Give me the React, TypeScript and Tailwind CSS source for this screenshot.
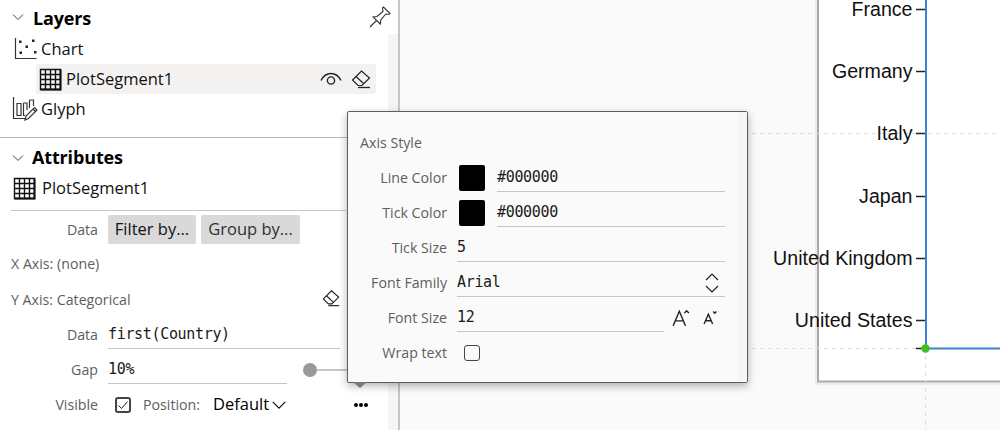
import React from "react";

const Chevron = ({ className = "", stroke = "#444" }: { className?: string; stroke?: string }) => (
  <svg width="14" height="14" viewBox="0 0 14 14" className={className} fill="none" stroke={stroke} strokeWidth="1">
    <path d="M2 4.5 L7 9.5 L12 4.5" />
  </svg>
);

const GridIcon = ({ size = 23 }: { size?: number }) => (
  <svg width={size} height={size} viewBox="0 0 23 23" fill="none" stroke="#111" strokeWidth="1.4" className="shrink-0">
    <path d="M1.5 1.5H21.5V21.5H1.5Z M1.5 6.5H21.5 M1.5 11.5H21.5 M1.5 16.5H21.5 M6.5 1.5V21.5 M11.5 1.5V21.5 M16.5 1.5V21.5" />
    <path d="M1.5 21.5H21.5V1.5" strokeWidth="2" />
  </svg>
);

const ChartIcon = () => (
  <svg width="23" height="22" viewBox="0 0 23 22" fill="none" className="shrink-0">
    <path d="M1.5 0V20.5H22.5" stroke="#333" strokeWidth="1.2" />
    <g fill="#222">
      <rect x="5" y="2.5" width="2.5" height="2.5" />
      <rect x="18" y="1.5" width="2.5" height="2.5" />
      <rect x="11.5" y="7.5" width="2.5" height="2.5" />
      <rect x="5.5" y="13.5" width="2.5" height="2.5" />
      <rect x="20" y="13" width="2.5" height="2.5" />
    </g>
  </svg>
);

const GlyphIcon = () => (
  <svg width="26" height="24" viewBox="0 0 26 24" fill="none" stroke="#333" strokeWidth="1.2" className="shrink-0">
    <path d="M1.5 0V21.5H13" />
    <path d="M5 6.5H9V18.5H5Z M11.5 6H15V13 M11.5 6V18.5H13 M17.5 3H21.5V9 M17.5 3V11" />
    <path d="M13 23L14 19L22.5 10.5L25 13L16.5 21.5Z M21 12L23.5 14.5" />
  </svg>
);

const Eraser = ({ size = 20 }: { size?: number }) => (
  <svg width={size} height={size} viewBox="0 0 20 20" fill="none" stroke="#222" strokeWidth="1.2" className="shrink-0">
    <path d="M1.5 11L10.5 2L18.5 9L11 16.5H7Z" />
    <path d="M5 7.5L12.5 14.5" />
    <path d="M7 18.5H19" strokeWidth="1.3" />
  </svg>
);

const Eye = () => (
  <svg width="22" height="16" viewBox="0 0 22 16" fill="none" stroke="#222" strokeWidth="1.4" className="shrink-0">
    <path d="M1 9.5C4 3.5 8 2.5 11 2.5C14 2.5 18 3.5 21 9.5" />
    <circle cx="11" cy="9.5" r="3.6" />
  </svg>
);

const Pin = () => (
  <svg width="22" height="22" viewBox="0 0 22 22" fill="none" stroke="#333" strokeWidth="1.1" className="shrink-0">
    <path d="M1 21L7.5 14.5 M4 11L8 10.5L14 5.5L13.5 2L14.5 1L21 7.5L20 8.5L16.8 8L11.8 14L11.3 18Z" />
  </svg>
);

const Check = ({ checked }: { checked?: boolean }) => (
  <span className={`flex h-[16px] w-[16px] shrink-0 items-center justify-center rounded-[3px] border-[#444] ${checked ? "border-2" : "border"}`}>
    {checked && (
      <svg width="12" height="12" viewBox="0 0 12 12" fill="none" stroke="#222" strokeWidth="1">
        <path d="M1.5 6.5L4.5 9.5L10.5 2.5" />
      </svg>
    )}
  </span>
);

const Label = "text-[14.2px] text-[#605e5c]";

const Row = ({ label, children }: { label: string; children?: React.ReactNode }) => (
  <div className="flex h-[35px] items-center">
    <span className={`w-[87px] shrink-0 text-right ${Label}`}>{label}</span>
    {children}
  </div>
);

const Mono = "font-['DejaVu_Sans_Mono',monospace] pt-[1px] text-[15px] tracking-[-0.33px] text-[#1a1a1a]";
const Body = "text-[16.5px] tracking-[0px]";

const PanelRow = ({ label, children }: { label: string; children?: React.ReactNode }) => (
  <div className="flex h-[35px] items-center">
    <span className={`w-[98px] shrink-0 text-right ${Label}`}>{label}</span>
    {children}
  </div>
);

export default function App() {
  const labels: [string, number][] = [
    ["France", 9],
    ["Germany", 71],
    ["Italy", 133],
    ["Japan", 196],
    ["United Kingdom", 258],
    ["United States", 320],
  ];
  return (
    <div className="relative flex h-[430px] w-[1000px] overflow-hidden bg-[#fafafa] font-['Open_Sans',sans-serif] text-[#111]">
      {/* Left panel */}
      <aside className="flex h-full w-[400px] shrink-0 border-r-2 border-[#c8c6c4] bg-white">
        <div className="w-[388px] shrink-0">
          <header className="-mr-[3px] flex h-[34px] items-center pl-[11px]">
            <Chevron />
            <h2 className="ml-[8px] flex-1 pt-[2px] text-[18px] font-bold tracking-[-0.15px] text-black">Layers</h2>
            <Pin />
          </header>
          <div className={`flex h-[30px] items-center pl-[14px] ${Body}`}>
            <ChartIcon />
            <span className="ml-[4px] pt-[1px]">Chart</span>
          </div>
          <div className={`ml-[36px] mr-[12px] flex h-[30px] items-center rounded-[3px] bg-[#f3f2f1] pl-[3px] pr-[5px] ${Body}`}>
            <GridIcon size={23} />
            <span className="ml-[4px] flex-1 pt-[1px]">PlotSegment1</span>
            <Eye />
            <span className="ml-[9px]"><Eraser /></span>
          </div>
          <div className={`flex h-[30px] items-center pl-[12px] ${Body}`}>
            <GlyphIcon />
            <span className="ml-[3px] pt-[1px]">Glyph</span>
          </div>
          <div className="mt-[13px] -mr-[12px] border-t border-[#b4b4b4]" />
          <header className="flex h-[38px] items-center pl-[11px] pt-[1px]">
            <Chevron />
            <h2 className="ml-[7px] text-[18px] font-bold tracking-[-0.15px] text-black">Attributes</h2>
          </header>
          <div className={`flex h-[24px] items-center pl-[13px] ${Body}`}>
            <GridIcon size={23} />
            <span className="ml-[6px] pt-[1px]">PlotSegment1</span>
          </div>
          <div className="ml-[11px] mt-[10px] w-[335px] border-t border-[#c8c6c4]" />
          <div className="flex h-[33px] items-center pt-[4px]">
            <span className={`w-[98px] shrink-0 text-right ${Label}`}>Data</span>
            <button className={`ml-[10px] h-[29px] w-[88px] rounded-[2px] bg-[#d9d9d9] ${Body}`}>Filter by...</button>
            <button className={`ml-[5px] h-[29px] w-[99px] rounded-[2px] bg-[#d9d9d9] text-[#323130] ${Body}`}>Group by...</button>
          </div>
          <div className={`flex h-[37px] items-center pl-[11px] pt-[3px] ${Label}`}>X Axis: (none)</div>
          <div className={`flex h-[36px] items-center justify-between pl-[11px] pr-[48px] pt-[1px] ${Label}`}>
            Y Axis: Categorical
            <span className="mb-[4px]"><Eraser size={18} /></span>
          </div>
          <PanelRow label="Data">
            <div className={`ml-[10px] flex h-[29px] w-[232px] items-center border-b border-[#c8c6c4] ${Mono}`}>first(Country)</div>
          </PanelRow>
          <PanelRow label="Gap">
            <div className={`ml-[10px] flex h-[29px] w-[179px] items-center border-b border-[#c8c6c4] ${Mono}`}>10%</div>
            <div className="ml-[16px] h-[14px] w-[14px] shrink-0 rounded-full bg-[#999]" />
            <div className="h-[2px] w-[30px] bg-[#c8c6c4]" />
          </PanelRow>
          <PanelRow label="Visible">
            <span className="ml-[17px]"><Check checked /></span>
            <span className={`ml-[12px] ${Label}`}>Position:</span>
            <span className={`ml-[13px] text-black ${Body}`}>Default</span>
            <Chevron className="ml-[3px] scale-125" stroke="#111" />
            <span className="ml-[68px] flex gap-[1px]">
              <i className="h-[4px] w-[4px] rounded-full bg-black" />
              <i className="h-[4px] w-[4px] rounded-full bg-black" />
              <i className="h-[4px] w-[4px] rounded-full bg-black" />
            </span>
          </PanelRow>
        </div>
        <div className="mt-[34px] flex-1 bg-[#f5f5f5]" />
      </aside>

      {/* Canvas: chart drawing */}
      <svg width="600" height="430" viewBox="400 0 600 430" className="shrink-0">
        <rect x="815" y="-10" width="190" height="395" fill="#ececec" />
        <rect x="818" y="-10" width="190" height="391.5" fill="#fff" stroke="#aaa" strokeWidth="2" />
        <path d="M400 133.5H1000 M400 348.5H1000 M925.5 348V430" stroke="#ddd" strokeDasharray="4 4" fill="none" />
        <g fontFamily="'Liberation Sans',Arial,sans-serif" fontSize="19.6" fill="#111" textAnchor="end">
          {labels.map(([t, y]) => (
            <g key={t}>
              <text x="912.5" y={y + 7}>{t}</text>
              <path d={`M916 ${y + 0.5}H925`} stroke="#222" strokeWidth="1.5" />
            </g>
          ))}
        </g>
        <path d="M916 348.5H925" stroke="#222" strokeWidth="1.5" />
        <path d="M926 -5V348.5H1005" fill="none" stroke="#3b82d0" strokeWidth="2" />
        <circle cx="925.5" cy="348.5" r="4.2" fill="#3fc01e" />
      </svg>

      {/* Popup */}
      <div className="absolute left-[347px] top-[111px] flex h-[272px] w-[401px] rounded-[2px] border border-[#605e5c] bg-[#fafafa] shadow-[0_3px_8px_rgba(0,0,0,0.3)]">
        <div className="flex-1 pl-[12px] pr-[12px] pt-[19px]">
          <div className={`mb-[5px] h-[24px] leading-[24px] ${Label}`}>Axis Style</div>
          <Row label="Line Color">
            <span className="ml-[12px] h-[26px] w-[26px] shrink-0 rounded-[2px] bg-black" />
            <div className={`ml-[12px] flex h-[29px] flex-1 items-center border-b border-[#c8c6c4] ${Mono}`}>#000000</div>
          </Row>
          <Row label="Tick Color">
            <span className="ml-[12px] h-[26px] w-[26px] shrink-0 rounded-[2px] bg-black" />
            <div className={`ml-[12px] flex h-[29px] flex-1 items-center border-b border-[#c8c6c4] ${Mono}`}>#000000</div>
          </Row>
          <Row label="Tick Size">
            <div className={`ml-[10px] flex h-[29px] flex-1 items-center border-b border-[#c8c6c4] ${Mono}`}>5</div>
          </Row>
          <Row label="Font Family">
            <div className={`ml-[10px] flex h-[29px] flex-1 items-center justify-between border-b border-[#c8c6c4] pr-[5px] ${Mono}`}>
              Arial
              <svg width="16" height="22" viewBox="0 0 16 22" fill="none" stroke="#222" strokeWidth="1.2">
                <path d="M2 8L8 2L14 8 M2 14L8 20L14 14" />
              </svg>
            </div>
          </Row>
          <Row label="Font Size">
            <div className={`ml-[10px] flex h-[29px] w-[207px] items-center border-b border-[#c8c6c4] ${Mono}`}>12</div>
            <svg width="18" height="18" viewBox="0 0 16 16" fill="none" stroke="#222" strokeWidth="1.2" className="ml-[8px]">
              <path d="M1 15L6.5 2L12 15 M3 10.5H10 M11 3.5L13 1.5L15 3.5" />
            </svg>
            <svg width="15" height="15" viewBox="0 0 14 14" fill="none" stroke="#222" strokeWidth="1.3" className="ml-[13px]">
              <path d="M1 13L5 4L9 13 M2.5 10H7.5 M9.5 1.5L11 3L12.5 1.5" />
            </svg>
          </Row>
          <Row label="Wrap text">
            <span className="ml-[17px]"><Check /></span>
          </Row>
        </div>
        <div className="w-[10px] shrink-0 bg-[#f5f5f5]" />
      </div>
      {/* Beak */}
      <div className="absolute left-[353px] top-[382px] h-0 w-0 border-x-[7px] border-t-[6px] border-x-transparent border-t-[#777]" />
    </div>
  );
}
